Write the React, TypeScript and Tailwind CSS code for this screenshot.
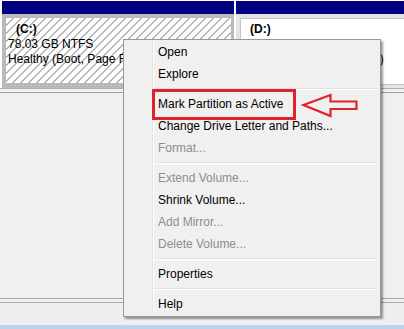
import React from "react";

type Item = { label?: string; disabled?: boolean; sep?: boolean };

const items: Item[] = [
  { label: "Open" },
  { label: "Explore" },
  { sep: true },
  { label: "Mark Partition as Active" },
  { label: "Change Drive Letter and Paths..." },
  { label: "Format...", disabled: true },
  { sep: true },
  { label: "Extend Volume...", disabled: true },
  { label: "Shrink Volume..." },
  { label: "Add Mirror...", disabled: true },
  { label: "Delete Volume...", disabled: true },
  { sep: true },
  { label: "Properties" },
  { sep: true },
  { label: "Help" },
];

function ContextMenu() {
  return (
    <div className="absolute left-[123px] top-[39px] w-[258px] border border-[#979797] bg-[#f0f0f0] py-px flex shadow-[2px_2px_2px_rgba(0,0,0,0.4)]">
      {/* gutter */}
      <div className="w-[28px] shrink-0" />
      <div className="w-px bg-[#e2e3e3] shrink-0" />
      <div className="w-px bg-white shrink-0" />
      <div className="flex-1 flex flex-col">
        {items.map((it, i) =>
          it.sep ? (
            <div key={i} className="h-[8px] pt-[3px] pr-[2px]">
              <div className="border-t border-[#e0e0e0]" />
              <div className="border-t border-white" />
            </div>
          ) : (
            <div
              key={i}
              className={
                it.disabled
                  ? "h-[22px] leading-[23px] pl-[4px] text-[#8d8d8d] whitespace-nowrap"
                  : "h-[22px] leading-[23px] pl-[4px] text-black whitespace-nowrap"
              }
            >
              {it.label}
            </div>
          )
        )}
      </div>
    </div>
  );
}

export default function App() {
  return (
    <div className="w-[404px] h-[329px] bg-[#f0f0f0] relative overflow-hidden font-['Liberation_Sans',Arial,sans-serif] text-[12px] text-black">
      {/* disk row */}
      <div className="flex h-[88px] bg-white pt-px">
        {/* C: */}
        <div className="w-[234px] pl-[2px] flex flex-col">
          <div className="h-[13px] bg-[#000080]" />
          <div className="flex-1 bg-[#b9b9b9] pt-[4px] pl-[4px] pr-[3px] pb-[5px]">
            <div className="h-full overflow-hidden pt-[4px] bg-[repeating-linear-gradient(135deg,#fff_0px,#fff_4.4px,#b4b4b4_4.4px,#b4b4b4_5.66px)]">
              <div className="leading-[15px] font-bold pl-[10px]">(C:)</div>
              <div className="leading-[15px] pl-[2px]">78.03 GB NTFS</div>
              <div className="leading-[15px] pl-[2px] whitespace-nowrap">Healthy (Boot, Page File, Crash Dump, Primary Partition)</div>
            </div>
          </div>
        </div>
        <div className="w-[2px] bg-white" />
        {/* D: */}
        <div className="flex-1 flex flex-col">
          <div className="h-[13px] bg-[#000080]" />
          <div className="flex-1 bg-[#e3e3e3] pt-[4px] pl-[4px] pb-[3px]">
            <div className="h-full overflow-hidden bg-white border border-[#c4c4c4] border-r-0 pt-[3px]">
              <div className="leading-[15px] font-bold pl-[9px]">(D:)</div>
              <div className="leading-[15px] pl-[2px]">97.63 GB NTFS</div>
              <div className="leading-[15px] pl-[2px] whitespace-nowrap">Healthy (Primary Partition)</div>
            </div>
          </div>
        </div>
      </div>

      {/* lower area */}
      <div className="h-[4px] border-t border-[#b0b0b0]" />
      <div className="h-[206px] border-t border-[#a0a0a0]" />
      <div className="h-[4px] border-t border-[#a8a8a8]" />
      <div className="h-[23px] border-t border-[#a8a8a8] bg-[#f0efef]" />
      <div className="h-[4px] bg-[#bcd3ec]" />

      <ContextMenu />

      {/* annotation: red box */}
      <div className="absolute left-[152px] top-[89px] w-[144px] h-[31px] border-[3px] border-[#e0222b]" />
      {/* annotation: arrow */}
      <svg className="absolute left-[300px] top-[92px]" width="60" height="28" viewBox="0 0 60 28">
        <path
          d="M3.5 13 L30.5 3 L30.5 9.5 L56.5 9.5 L56.5 17 L30.5 17 L30.5 24 Z"
          fill="none"
          stroke="#e0222b"
          strokeWidth="2.2"
          strokeLinejoin="miter"
        />
      </svg>
    </div>
  );
}
